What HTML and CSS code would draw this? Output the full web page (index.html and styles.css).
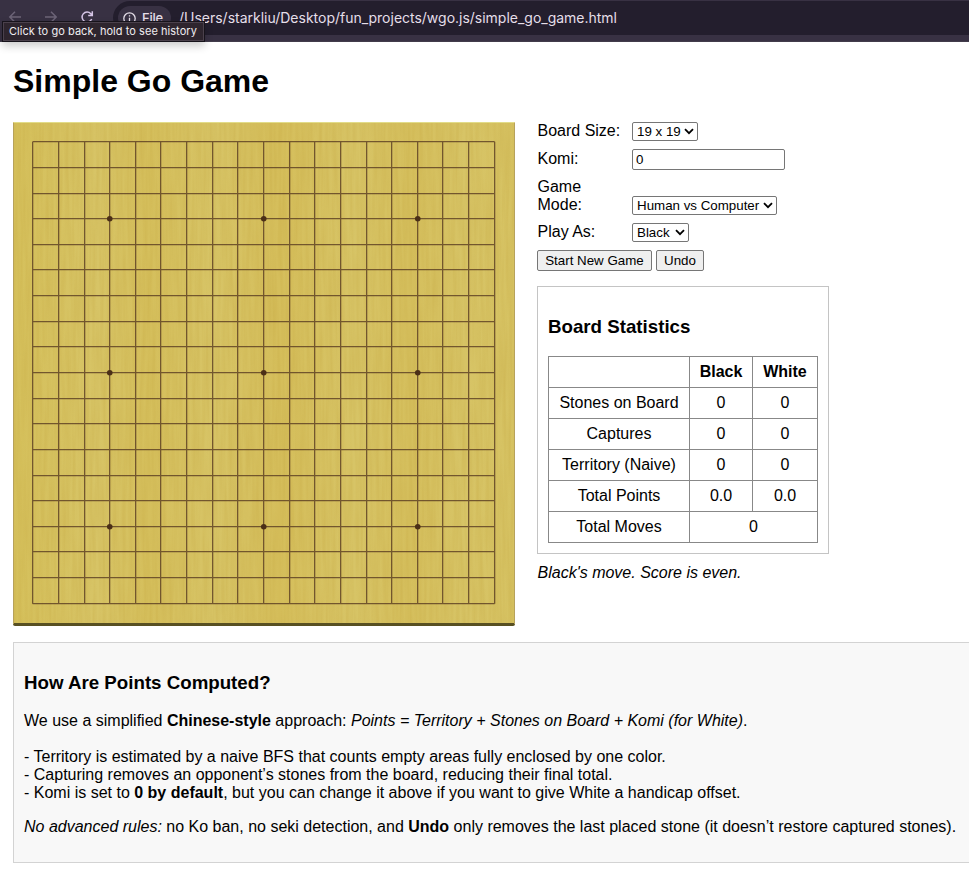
FILE: index.html
```html
<!DOCTYPE html>
<html lang="en">
<head>
<meta charset="utf-8">
<title>Simple Go Game</title>
<link rel="stylesheet" href="styles.css">
</head>
<body>
<header class="toolbar">
  <svg class="nav-icon dim" viewBox="0 0 12 12"><path d="M12 6H1M6 .8.8 6 6 11.2"/></svg>
  <svg class="nav-icon dim forward" viewBox="0 0 12 12"><path d="M0 6h11M6 .8 11.2 6 6 11.2"/></svg>
  <svg class="nav-icon reload" viewBox="0 0 12 12"><path d="M10.7 8A5 5 0 1 1 9.8 2.7L11.2 4.2M11.3 .3V4.4H7.2"/></svg>
  <div class="address">
    <span class="chip">
      <svg class="info-icon" viewBox="0 0 13 13"><circle cx="6.5" cy="6.5" r="5.7"/><path d="M6.5 5.8v3.7M6.5 3.3v1.3"/></svg>
      File
    </span>
    <span class="url">/Users/starkliu/Desktop/fun_projects/wgo.js/simple_go_game.html</span>
  </div>
  <div class="tooltip">Click to go back, hold to see history</div>
</header>
<main>
  <h1>Simple Go Game</h1>
  <div class="game">
    <svg class="board" viewBox="0 0 502 504">
      <defs>
        <filter id="grain" x="0" y="0" width="100%" height="100%" color-interpolation-filters="sRGB">
          <feTurbulence type="fractalNoise" baseFrequency="0.3 0.014" numOctaves="2" seed="7"/>
          <feColorMatrix values="0 0 0 0 .76  0 0 0 0 .64  0 0 0 0 .24  1.2 0 0 0 -.35"/>
        </filter>
        <linearGradient id="bands" x2="1" y2="0">
          <stop offset="0" stop-color="#d5c05b"/>
          <stop offset=".17" stop-color="#d7c466"/>
          <stop offset=".27" stop-color="#d5bf5c"/>
          <stop offset=".4" stop-color="#d7c466"/>
          <stop offset=".53" stop-color="#d5be5b"/>
          <stop offset=".68" stop-color="#d7c466"/>
          <stop offset=".79" stop-color="#d5bf5d"/>
          <stop offset=".9" stop-color="#d7c466"/>
          <stop offset="1" stop-color="#d6c262"/>
        </linearGradient>
      </defs>
      <rect y="4" width="502" height="500" rx="2" fill="#585022"/>
      <rect width="502" height="501" rx="1" fill="url(#bands)"/>
      <rect width="502" height="501" filter="url(#grain)" opacity=".4"/>
      <path d="M1 .5H501" stroke="#e2dc89"/>
      <path d="M.5 1V502M501.5 1V502" stroke="#b7a25b"/>
      <g id="lines" class="lines"></g>
    </svg>
    <section class="side">
      <div class="row"><label for="size">Board Size:</label><span class="pick size"><select id="size"><option>19 x 19</option></select><svg viewBox="0 0 10 7"><path d="M1 1.2 5 5.2 9 1.2"/></svg></span></div>
      <div class="row komi"><label for="komi">Komi:</label><input id="komi" type="text" value="0"></div>
      <div class="row mode"><label for="mode">Game Mode:</label><span class="pick wide"><select id="mode"><option>Human vs Computer</option></select><svg viewBox="0 0 10 7"><path d="M1 1.2 5 5.2 9 1.2"/></svg></span></div>
      <div class="row"><label for="color">Play As:</label><span class="pick color"><select id="color"><option>Black</option></select><svg viewBox="0 0 10 7"><path d="M1 1.2 5 5.2 9 1.2"/></svg></span></div>
      <div class="buttons"><button class="start">Start New Game</button><button class="undo">Undo</button></div>
      <div class="stats">
        <h3>Board Statistics</h3>
        <table>
          <colgroup><col class="c1"><col class="c2"><col class="c3"></colgroup>
          <tr><th></th><th>Black</th><th>White</th></tr>
          <tr><td>Stones on Board</td><td>0</td><td>0</td></tr>
          <tr><td>Captures</td><td>0</td><td>0</td></tr>
          <tr><td>Territory (Naive)</td><td>0</td><td>0</td></tr>
          <tr><td>Total Points</td><td>0.0</td><td>0.0</td></tr>
          <tr><td>Total Moves</td><td colspan="2">0</td></tr>
        </table>
      </div>
      <p class="status">Black's move. Score is even.</p>
    </section>
  </div>
  <section class="rules">
    <h3>How Are Points Computed?</h3>
    <p>We use a simplified <b>Chinese-style</b> approach: <i>Points = Territory + Stones on Board + Komi (for White)</i>.<br><br>- Territory is estimated by a naive BFS that counts empty areas fully enclosed by one color.<br>- Capturing removes an opponent’s stones from the board, reducing their final total.<br>- Komi is set to <b>0 by default</b>, but you can change it above if you want to give White a handicap offset.</p>
    <p><i>No advanced rules:</i> no Ko ban, no seki detection, and <b>Undo</b> only removes the last placed stone (it doesn’t restore captured stones).</p>
  </section>
</main>
<script src="board.js"></script>
</body>
</html>
```
FILE: styles.css
```css
* { box-sizing: border-box; }
body {
  margin: 0;
  height: 882px;
  overflow: hidden;
  background: #fff;
  color: #000;
  font: 16px/18px "Liberation Sans", Arial, sans-serif;
}
.toolbar {
  position: relative;
  display: flex;
  height: 42px;
  padding-left: 9px;
  background: #383143;
  border-bottom: 1px solid #423c4b;
}
.nav-icon {
  width: 12px;
  height: 12px;
  margin: 11px 24px 0 0;
  overflow: visible;
  fill: none;
  stroke: #d5c5e6;
  stroke-width: 1.5;
}
.dim { stroke: #6c6477; }
.reload { margin-right: 20px; }
.address {
  display: flex;
  flex: 1;
  align-items: center;
  height: 34px;
  margin-top: 1px;
  padding-left: 5px;
  border-radius: 17px 0 0 17px;
  background: #231e2d;
}
.chip {
  display: flex;
  align-items: center;
  gap: 6px;
  width: 53px;
  height: 24px;
  padding-left: 5px;
  border-radius: 12px;
  background: #383143;
  color: #e5dfe9;
  font: 500 13px Inter, sans-serif;
  letter-spacing: -.2px;
}
.info-icon {
  flex: none;
  width: 13px;
  height: 13px;
  fill: none;
  stroke: #e5dfe9;
  stroke-width: 1.3;
}
.url {
  margin-left: 8px;
  padding-bottom: 2px;
  color: #e5dfe9;
  font: 14px Inter, sans-serif;
  letter-spacing: -.01px;
  white-space: nowrap;
}
.tooltip {
  position: absolute;
  top: 21px;
  left: 2px;
  width: 203px;
  height: 21px;
  padding-left: 6px;
  border: 1px solid #17131b;
  box-shadow: inset 0 0 0 1px #4b414c, 0 4px 8px rgba(0, 0, 0, .2);
  background: #2e252e;
  color: #f0edf0;
  font: 11px/19px Inter, sans-serif;
  letter-spacing: .05px;
  white-space: nowrap;
}
main { padding: 21px 0 0 13px; }
h1 {
  height: 37px;
  margin: 0 0 22px;
  font-size: 32px;
  line-height: 37px;
}
.game { display: flex; gap: 22px; height: 520px; }
.board { display: block; flex: none; width: 502px; height: 504px; }
.lines { fill: none; stroke: #563820; stroke-width: 1.3; stroke-opacity: .78; }
.lines circle { fill: #4b2f17; stroke: none; }
.side { width: 292px; }
.row { display: flex; height: 19px; margin-bottom: 8px; }
.row label { width: 85px; margin-right: 10px; padding-left: .5px; }
.komi { height: 21px; }
.komi label { padding-top: 1px; }
.mode { height: 37px; align-items: flex-end; }
.mode label { height: 37px; padding-right: 20px; }
.pick { position: relative; height: 19px; }
.pick svg {
  position: absolute;
  top: 6px;
  right: 4px;
  width: 10px;
  height: 7px;
  fill: none;
  stroke: #000;
  stroke-width: 1.8;
}
.size { width: 66px; }
.wide { width: 145px; }
.color { width: 57px; }
select, input, button {
  margin: 0;
  border: 1px solid #767676;
  border-radius: 2px;
  color: #000;
  font: 13.333px "Liberation Sans", Arial, sans-serif;
}
select {
  display: block;
  width: 100%;
  height: 19px;
  padding: 0 0 0 4px;
  appearance: none;
  background: #fff;
}
input { width: 153px; height: 21px; padding: 0 3px; }
.buttons { display: flex; gap: 4px; height: 21px; }
button { height: 21px; padding: 0; background: #efefef; }
.start { width: 115px; }
.undo { width: 48px; }
.stats {
  height: 268px;
  margin-top: 15px;
  padding: 10px;
  border: 1px solid #c4c4c4;
}
h3 { margin: 0; font-size: 18.72px; line-height: 21px; }
.stats h3 { margin: 19px 0 19px; }
table { width: 270px; border-collapse: collapse; table-layout: fixed; }
.c1 { width: 141px; }
.c2 { width: 63px; }
.c3 { width: 65px; }
th, td { height: 31px; padding: 0; border: 1px solid #888; text-align: center; }
.status { margin: 10px 0 0; padding-left: .5px; font-style: italic; }
.rules {
  width: 990px;
  height: 221px;
  padding: 29px 10px 0;
  border: 1px solid #d3d3d3;
  background: #f8f8f8;
  white-space: nowrap;
}
.rules p { margin: 19px 0 0; }
.rules p + p { margin-top: 16px; }
```
FILE: board.js
```js
const ns = "http://www.w3.org/2000/svg";
const layer = document.getElementById("lines");
// Whole-pixel distance of each grid line from the first one.
const offsets = [0, 26, 52, 77, 103, 128, 154, 180, 205, 231, 257, 282, 308, 334, 359, 385, 410, 436, 462];
const origin = 19.65;
const add = (tag, attrs) => {
  const el = document.createElementNS(ns, tag);
  for (const key in attrs) el.setAttribute(key, attrs[key]);
  layer.appendChild(el);
};
let d = "";
for (const o of offsets) {
  const p = o + origin;
  d += `M${p} ${origin}V${origin + 462}M${origin} ${p}H${origin + 462}`;
}
add("path", { d });
for (const i of [3, 9, 15])
  for (const j of [3, 9, 15])
    add("circle", { cx: offsets[i] + origin + .1, cy: offsets[j] + origin + .1, r: 2.8 });
```
